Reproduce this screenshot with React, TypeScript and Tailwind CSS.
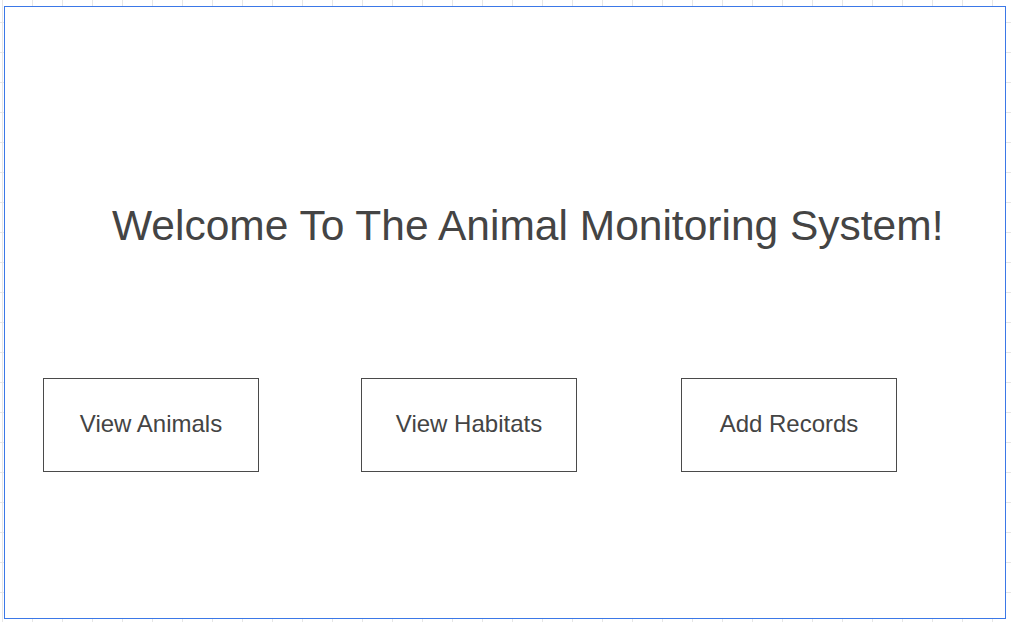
import React from "react";

export default function App() {
  const font = { fontFamily: '"Liberation Sans", Arial, sans-serif' };
  return (
    <div
      className="w-[1011px] h-[622px] bg-white overflow-hidden relative"
      style={{
        ...font,
        backgroundImage:
          "linear-gradient(to right, #e6e6e6 1px, transparent 1px), linear-gradient(to bottom, #e6e6e6 1px, transparent 1px)",
        backgroundSize: "30px 30px",
        backgroundPosition: "2px 22px",
      }}
    >
      <div className="ml-[4px] mt-[6px] w-[1002px] h-[613px] border border-[#3b78e7] bg-white flex flex-col">
        <div className="pt-[196px] pl-[107px] text-[42.5px] leading-[46px] text-[#444444] whitespace-nowrap">
          Welcome To The Animal Monitoring System!
        </div>
        <div className="mt-[129px] pl-[38px] flex">
          <div className="w-[216px] h-[94px] pb-[3px] border border-[#4a4a4a] flex items-center justify-center text-[24px] text-[#444444]">
            View Animals
          </div>
          <div className="ml-[102px] w-[216px] h-[94px] pb-[3px] border border-[#4a4a4a] flex items-center justify-center text-[24px] text-[#444444]">
            View Habitats
          </div>
          <div className="ml-[104px] w-[216px] h-[94px] pb-[3px] border border-[#4a4a4a] flex items-center justify-center text-[24px] text-[#444444]">
            Add Records
          </div>
        </div>
      </div>
    </div>
  );
}
